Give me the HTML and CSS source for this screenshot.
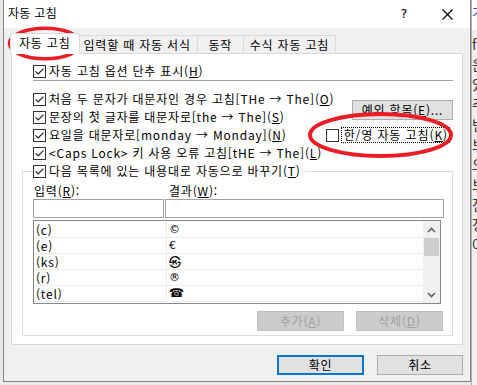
FILE: index.html
```html
<!DOCTYPE html>
<html lang="ko">
<head>
<meta charset="utf-8">
<title>자동 고침</title>
<link rel="stylesheet" href="styles.css">
</head>
<body>
<div class="behind">
  <div class="behind-top">가</div>
  <div class="behind-col">
    <span>fi</span><span>은</span><span>있</span><span>주</span><span>변</span><span>보</span><span>오</span><span>보</span><span>전</span><span>정</span><span>어</span>
  </div>
</div>

<div class="dialog">
  <div class="titlebar">
    <span class="title">자동 고침</span>
    <span class="tb-btn help">?</span>
    <span class="tb-btn close"><svg width="11" height="11" viewBox="0 0 11 11"><path d="M0.5 0.5L10.5 10.5M10.5 0.5L0.5 10.5" stroke="#000" stroke-width="1.1" fill="none"/></svg></span>
  </div>

  <div class="client">
    <div class="tabs">
      <div class="tab active">자동 고침</div>
      <div class="tab">입력할 때 자동 서식</div>
      <div class="tab narrow">동작</div>
      <div class="tab last">수식 자동 고침</div>
    </div>

    <div class="panel">
      <div class="chk indent">
        <svg class="cb" viewBox="0 0 13 13"><rect x="0.5" y="0.5" width="12" height="12" fill="#fff" stroke="#333"/><path d="M2.6 6.4L5.2 9L10.4 3.6" stroke="#222" stroke-width="1.2" fill="none"/></svg>
        <span>자동 고침 옵션 단추 표시(<u>H</u>)</span>
      </div>
      <div class="sep"></div>

      <div class="opts">
        <div class="chk r1">
          <svg class="cb" viewBox="0 0 13 13"><rect x="0.5" y="0.5" width="12" height="12" fill="#fff" stroke="#333"/><path d="M2.6 6.4L5.2 9L10.4 3.6" stroke="#222" stroke-width="1.2" fill="none"/></svg>
          <span>처음 두 문자가 대문자인 경우 고침[THe → The](<u>O</u>)</span>
        </div>
        <div class="chk r2">
          <svg class="cb" viewBox="0 0 13 13"><rect x="0.5" y="0.5" width="12" height="12" fill="#fff" stroke="#333"/><path d="M2.6 6.4L5.2 9L10.4 3.6" stroke="#222" stroke-width="1.2" fill="none"/></svg>
          <span>문장의 첫 글자를 대문자로[the → The](<u>S</u>)</span>
        </div>
        <div class="chk r3">
          <svg class="cb" viewBox="0 0 13 13"><rect x="0.5" y="0.5" width="12" height="12" fill="#fff" stroke="#333"/><path d="M2.6 6.4L5.2 9L10.4 3.6" stroke="#222" stroke-width="1.2" fill="none"/></svg>
          <span>요일을 대문자로[monday → Monday](<u>N</u>)</span>
        </div>
        <div class="chk r4">
          <svg class="cb" viewBox="0 0 13 13"><rect x="0.5" y="0.5" width="12" height="12" fill="#fff" stroke="#333"/><path d="M2.6 6.4L5.2 9L10.4 3.6" stroke="#222" stroke-width="1.2" fill="none"/></svg>
          <span>&lt;Caps Lock&gt; 키 사용 오류 고침[tHE → The](<u>L</u>)</span>
        </div>
        <button class="btn exc">예외 항목(<u>E</u>)...</button>
        <div class="chk hanyoung">
          <svg class="cb" viewBox="0 0 13 13"><rect x="0.5" y="0.5" width="12" height="12" fill="#fff" stroke="#333"/></svg>
          <span class="focus">한/영 자동 고침(<u>K</u>)</span>
        </div>
      </div>

      <fieldset class="group">
        <legend>
          <span class="chk">
            <svg class="cb" viewBox="0 0 13 13"><rect x="0.5" y="0.5" width="12" height="12" fill="#fff" stroke="#333"/><path d="M2.6 6.4L5.2 9L10.4 3.6" stroke="#222" stroke-width="1.2" fill="none"/></svg>
            <span>다음 목록에 있는 내용대로 자동으로 바꾸기(<u>T</u>)</span>
          </span>
        </legend>

        <div class="fields">
          <span class="lbl">입력(<u>R</u>):</span>
          <span class="lbl lbl2">결과(<u>W</u>):</span>
          <div class="input"></div>
          <div class="input"></div>
        </div>

        <div class="list">
          <div class="rows">
            <div class="row"><span class="c1">(c)</span><span class="c2">©</span></div>
            <div class="row"><span class="c1">(e)</span><span class="c2">€</span></div>
            <div class="row"><span class="c1">(ks)</span><span class="c2 ks">㉿</span></div>
            <div class="row"><span class="c1">(r)</span><span class="c2">®</span></div>
            <div class="row"><span class="c1">(tel)</span><span class="c2 tel">☎</span></div>
          </div>
          <div class="scroll">
            <div class="arrow"><svg width="9" height="6" viewBox="0 0 9 6"><path d="M1 5L4.5 1.5L8 5" stroke="#606060" stroke-width="1.6" fill="none"/></svg></div>
            <div class="thumb"></div>
            <div class="track"></div>
            <div class="arrow"><svg width="9" height="6" viewBox="0 0 9 6"><path d="M1 1L4.5 4.5L8 1" stroke="#606060" stroke-width="1.6" fill="none"/></svg></div>
          </div>
        </div>

        <div class="actions">
          <button class="btn dis">추가(<u>A</u>)</button>
          <button class="btn dis">삭제(<u>D</u>)</button>
        </div>
      </fieldset>
    </div>

    <div class="footer">
      <button class="btn ok">확인</button>
      <button class="btn cancel">취소</button>
    </div>
  </div>
</div>

<svg class="marks" width="477" height="385" viewBox="0 0 477 385">
  <ellipse cx="45" cy="43.5" rx="35.5" ry="15.3" fill="none" stroke="#ec1c24" stroke-width="3.5"/>
  <ellipse cx="380.5" cy="135" rx="70.5" ry="21" fill="none" stroke="#ec1c24" stroke-width="4"/>
</svg>
</body>
</html>
```

FILE: styles.css
```css
* { box-sizing: border-box; }

html, body {
  margin: 0;
  padding: 0;
}

body {
  width: 477px;
  height: 385px;
  overflow: hidden;
  position: relative;
  background: #e9e9e9;
  font-family: "Noto Sans CJK KR", "Noto Sans", sans-serif;
  font-size: 12px;
  line-height: 16px;
  letter-spacing: 0.8px;
  color: #000;
}

/* window behind the dialog (free canvas) */
.behind {
  position: absolute;
  left: 471px;
  top: 0;
  width: 6px;
  height: 385px;
  overflow: hidden;
  background: #f0f0f0;
  border-left: 1px solid #b0b0b0;
  letter-spacing: 0;
}

.behind-top {
  height: 30px;
  background: #fff;
  color: #2a5db0;
  font-size: 13px;
  padding-top: 4px;
}

.behind-col {
  display: flex;
  flex-direction: column;
  padding-top: 4px;
  font-size: 14px;
  line-height: 20px;
  color: #333;
}

/* dialog */
.dialog {
  position: relative;
  margin-left: 3px;
  width: 468px;
  height: 382px;
  border: 1px solid #858585;
  border-top: none;
  background: #f0f0f0;
  display: flex;
  flex-direction: column;
}

.titlebar {
  height: 28px;
  background: #fff;
  display: flex;
  align-items: center;
  letter-spacing: 0.3px;
}

.title {
  flex: 1;
  padding-left: 4px;
  padding-bottom: 2px;
}

.tb-btn {
  width: 46px;
  height: 28px;
  display: flex;
  align-items: center;
  justify-content: center;
}

.help {
  font-family: "DejaVu Sans", sans-serif;
  font-size: 13px;
  padding-left: 6px;
}

.client {
  flex: 1;
  padding: 5px 7px 0 7px;
  display: flex;
  flex-direction: column;
}

/* tabs */
.tabs {
  display: flex;
  align-items: flex-end;
  height: 21px;
  padding-left: 1px;
  margin-bottom: -1px;
  position: relative;
  z-index: 1;
}

.tab {
  height: 18px;
  margin-bottom: 1px;
  padding: 0 6px;
  border: 1px solid #d9d9d9;
  border-bottom: none;
  border-right: none;
  background: #f0f0f0;
  line-height: 17px;
  white-space: nowrap;
  text-align: center;
}

.tab.narrow { min-width: 46px; padding: 0 5px; }
.tab.last { border-right: 1px solid #d9d9d9; }

.tab.active {
  height: 21px;
  margin: 0 -2px 0 -2px;
  padding: 0 8px 2px 8px;
  background: #fff;
  border-right: 1px solid #d9d9d9;
  line-height: 18px;
  position: relative;
  z-index: 2;
}

.tab.active + .tab { border-left-color: transparent; padding-left: 5px; }

/* panel */
.panel {
  height: 292px;
  background: #fff;
  border: 1px solid #d9d9d9;
  padding: 8px 9px 0 10px;
}

.chk {
  display: flex;
  align-items: center;
  gap: 3px;
  height: 18px;
  white-space: nowrap;
}

.cb {
  width: 13px;
  height: 13px;
  flex: none;
}

.indent { margin-left: 11px; }

.sep {
  margin-left: 11px;
  height: 1px;
  background: #a0a0a0;
}

.opts {
  margin: 9px 0 0 11px;
  display: grid;
  grid-template-columns: minmax(0, 1fr) auto;
  grid-template-rows: repeat(4, 18px);
}

.r1 { grid-column: 1; grid-row: 1; }
.r2 { grid-column: 1; grid-row: 2; }
.r3 { grid-column: 1; grid-row: 3; }
.r4 { grid-column: 1; grid-row: 4; }

.exc {
  grid-column: 2;
  grid-row: 1 / 3;
  align-self: center;
  justify-self: end;
  width: 101px;
  margin-top: 4px;
  letter-spacing: 0.6px;
  padding-right: 5px;
}

.hanyoung {
  grid-column: 2;
  grid-row: 3;
  justify-self: end;
  margin-right: 3px;
  gap: 2px;
}

.focus {
  border: 1px dotted #000;
  padding: 0 1px 0 2px;
  line-height: 14px;
  margin-top: -1px;
  letter-spacing: 0.9px;
}

/* group box */
.group {
  margin: 0;
  min-width: 0;
  padding: 0 8px 4px 10px;
  border: 1px solid #dcdcdc;
}

.group legend {
  padding: 0 4px 0 0;
  margin: 0;
}

.fields {
  margin-top: 3px;
  display: grid;
  grid-template-columns: 131px 1fr;
  column-gap: 1px;
}

.lbl {
  padding-left: 1px;
  height: 16px;
}

.lbl2 { padding-left: 4px; }

.input {
  height: 19px;
  border: 1px solid #a2a2a2;
  background: #fff;
}

.list {
  margin-top: 2px;
  width: 408px;
  height: 84px;
  border: 1px solid #828790;
  display: flex;
  padding-top: 1px;
}

.rows { flex: 1; }

.row {
  display: grid;
  grid-template-columns: 133px 1fr;
  height: 16px;
  border-bottom: 1px solid #ececec;
  line-height: 15px;
}

.c1 {
  padding-left: 2px;
  border-right: 1px solid #ececec;
}

.c2 {
  padding-left: 2px;
  font-family: "DejaVu Sans", "Noto Sans CJK KR", sans-serif;
  font-size: 11px;
}

.c2.ks {
  font-family: "Noto Sans CJK KR", sans-serif;
  font-size: 12px;
}

.tel { font-size: 12px; }

.scroll {
  width: 17px;
  background: #f0f0f0;
  display: flex;
  flex-direction: column;
  margin-top: -1px;
}

.arrow {
  height: 17px;
  display: flex;
  align-items: center;
  justify-content: center;
}

.thumb {
  height: 18px;
  margin: 0 1px;
  background: #cdcdcd;
}

.track { flex: 1; }

.actions {
  margin-top: 7px;
  margin-right: 1px;
  display: flex;
  justify-content: flex-end;
  gap: 12px;
}

/* buttons */
.btn {
  font: inherit;
  letter-spacing: 0.8px;
  color: #000;
  height: 20px;
  padding: 0;
  background: #e1e1e1;
  border: 1px solid #adadad;
  line-height: 16px;
}

.btn.dis {
  width: 87px;
  background: #cccccc;
  border-color: #bfbfbf;
  color: #a0a0a0;
}

.footer {
  margin-top: 10px;
  display: flex;
  justify-content: flex-end;
  gap: 13px;
}

.ok {
  width: 87px;
  border: 2px solid #0078d7;
}

.cancel { width: 86px; }

/* red annotation marks */
.marks {
  position: absolute;
  left: 0;
  top: 0;
  pointer-events: none;
}
```
